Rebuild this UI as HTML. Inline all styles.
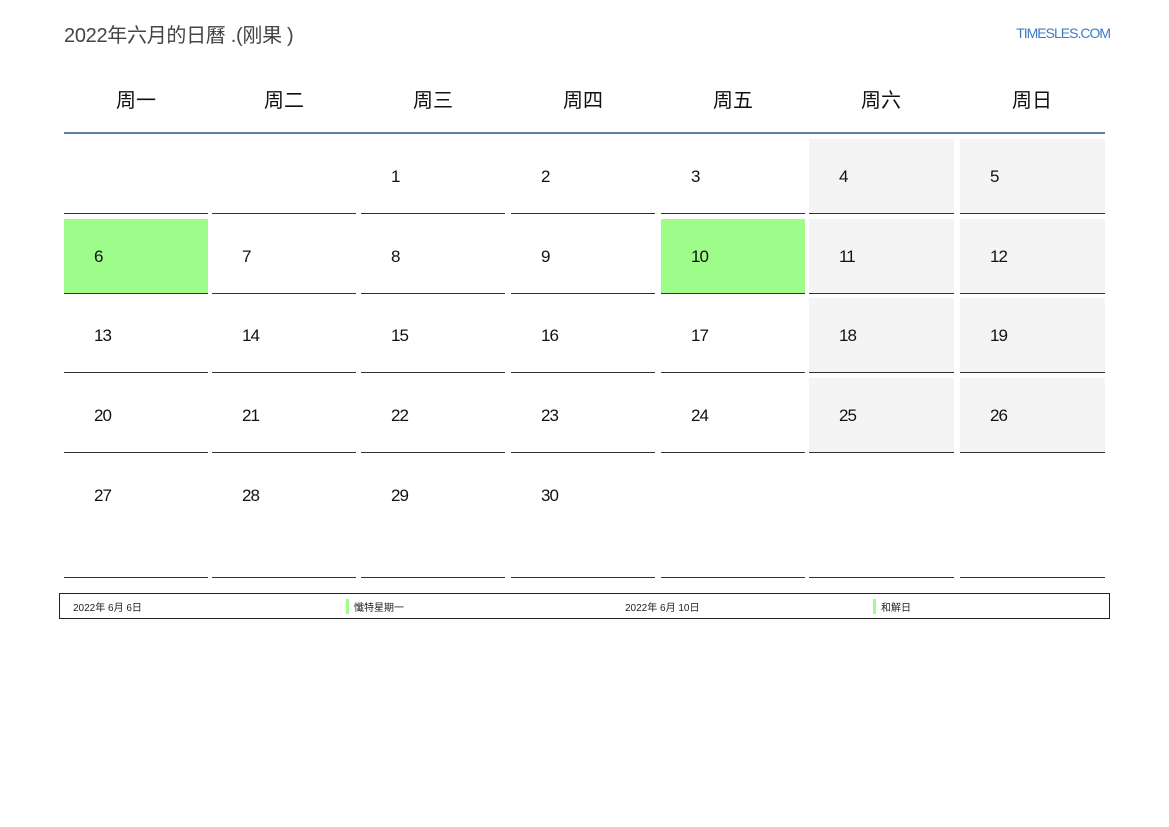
<!DOCTYPE html>
<html><head><meta charset="utf-8"><style>
body{margin:0;width:1169px;height:827px;background:#fff;position:relative;font-family:"Liberation Sans","Noto Sans CJK SC",sans-serif;color:#222;overflow:hidden}
.a{position:absolute}
.t{left:64px;top:19px;font-size:20px;color:#444;letter-spacing:-0.3px}
.lg{right:59px;top:25px;font-size:14px;color:#3a7bc8;letter-spacing:-1px}
.h{top:84px;width:144px;text-align:center;font-size:20px;color:#111}
.bl{left:64px;top:132px;width:1041px;height:2px;background:#5f7ea6}
.c{position:absolute;width:144px;border-bottom:1px solid #333;box-sizing:border-box}
.c span{position:absolute;left:30px;top:28px;font-size:17px;letter-spacing:-1px;color:#111}
.g{background:#f4f4f4}.gr{background:#9efc8a}
.r1{top:139px;height:75px}.r2{top:219px;height:75px}.r3{top:298px;height:75px}.r4{top:378px;height:75px}.r5{top:458px;height:120px}
.x1{left:64px}.x2{left:212px}.x3{left:361px}.x4{left:511px}.x5{left:661px}.x6{left:809px;width:145px}.x7{left:960px;width:145px}
.lgd{left:59px;top:593px;width:1051px;height:26px;border:1px solid #222;box-sizing:border-box;font-size:10px;color:#222}
.lgd div{position:absolute;top:5px}
.bar{border-left:3px solid #9efc8a;padding-left:5px}
</style></head><body>
<div class="a t">2022年六月的日曆 .(刚果 )</div>
<div class="a lg">TIMESLES.COM</div>
<div class="a h" style="left:64px">周一</div>
<div class="a h" style="left:212px">周二</div>
<div class="a h" style="left:361px">周三</div>
<div class="a h" style="left:511px">周四</div>
<div class="a h" style="left:661px">周五</div>
<div class="a h" style="left:809px">周六</div>
<div class="a h" style="left:960px">周日</div>
<div class="a bl"></div>

<div class="c r1 x1"></div><div class="c r1 x2"></div><div class="c r1 x3"><span>1</span></div><div class="c r1 x4"><span>2</span></div><div class="c r1 x5"><span>3</span></div><div class="c r1 x6 g"><span>4</span></div><div class="c r1 x7 g"><span>5</span></div>
<div class="c r2 x1 gr"><span>6</span></div><div class="c r2 x2"><span>7</span></div><div class="c r2 x3"><span>8</span></div><div class="c r2 x4"><span>9</span></div><div class="c r2 x5 gr"><span>10</span></div><div class="c r2 x6 g"><span>11</span></div><div class="c r2 x7 g"><span>12</span></div>
<div class="c r3 x1"><span>13</span></div><div class="c r3 x2"><span>14</span></div><div class="c r3 x3"><span>15</span></div><div class="c r3 x4"><span>16</span></div><div class="c r3 x5"><span>17</span></div><div class="c r3 x6 g"><span>18</span></div><div class="c r3 x7 g"><span>19</span></div>
<div class="c r4 x1"><span>20</span></div><div class="c r4 x2"><span>21</span></div><div class="c r4 x3"><span>22</span></div><div class="c r4 x4"><span>23</span></div><div class="c r4 x5"><span>24</span></div><div class="c r4 x6 g"><span>25</span></div><div class="c r4 x7 g"><span>26</span></div>
<div class="c r5 x1"><span>27</span></div><div class="c r5 x2"><span>28</span></div><div class="c r5 x3"><span>29</span></div><div class="c r5 x4"><span>30</span></div><div class="c r5 x5"></div><div class="c r5 x6"></div><div class="c r5 x7"></div>

<div class="a lgd">
<div style="left:13px">2022年 6月 6日</div>
<div class="bar" style="left:286px">懺特星期一</div>
<div style="left:565px">2022年 6月 10日</div>
<div class="bar" style="left:813px">和解日</div>
</div>
</body></html>
